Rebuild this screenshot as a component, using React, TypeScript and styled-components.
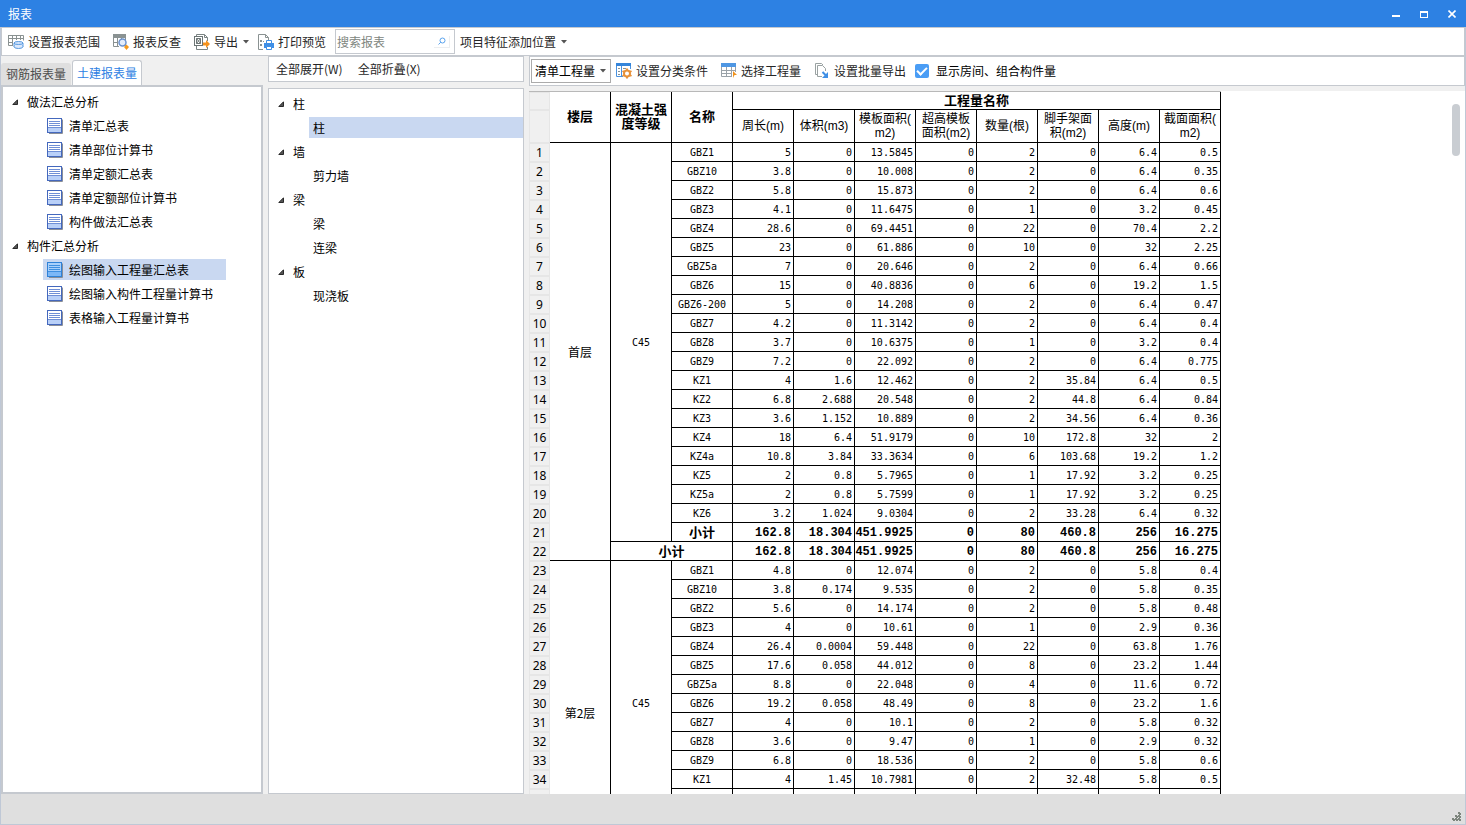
import React from "react";
import styled, { createGlobalStyle, css } from "styled-components";

const UI_FONT = `"Noto Sans CJK SC", "Noto Sans", sans-serif`;
const HEAD_FONT = `"Liberation Sans", "Noto Sans CJK SC", sans-serif`;
const MONO_FONT = `"DejaVu Sans Mono", "Noto Sans CJK SC", monospace`;
const LINE = "#c5c9cf";
const SELECTED = "#c9d8f1";

const GlobalStyle = createGlobalStyle`
  * { box-sizing: border-box; }
  body {
    margin: 0;
    font: 12px/18px ${UI_FONT};
    color: #000;
    background: #f0f0f0;
  }
  button, input, select { font: inherit; color: inherit; }
  ul { list-style: none; margin: 0; padding: 0; }
`;

const Window = styled.div`
  display: flex;
  flex-direction: column;
  height: 100vh;
  overflow: hidden;
`;

const TitleBar = styled.header`
  display: flex;
  justify-content: space-between;
  flex: none;
  height: 27px;
  padding-left: 8px;
  background: #2d81e3;
  color: #fff;
`;

const Title = styled.h1`
  margin: 0;
  font-size: 12px;
  font-weight: 400;
  line-height: 27px;
`;

const WindowButton = styled.button`
  width: 28px;
  height: 27px;
  padding: 0;
  border: 0;
  background: none;
  color: #fff;
  svg { display: block; margin: 0 auto; }
`;

const Frame = styled.div`
  display: flex;
  flex-direction: column;
  flex: 1;
  min-height: 0;
  border: solid #bfc8d6;
  border-width: 0 1px 1px;
`;

const Toolbar = styled.div`
  display: flex;
  align-items: center;
  flex: none;
  height: 29px;
  padding-left: 2px;
  background: #fff;
  border: 1px solid ${LINE};
`;

const CaretIcon = styled.svg`
  margin-left: 1px;
`;

const ToolButton = styled.button<{ $menu?: boolean; $plain?: boolean }>`
  display: flex;
  align-items: center;
  gap: 4px;
  flex: none;
  height: 22px;
  margin-right: 4px;
  padding: 0 ${(p) => (p.$menu ? 1 : p.$plain ? 7 : 5)}px 0 4px;
  border: 0;
  background: none;
  color: #262626;
  white-space: nowrap;
  svg { flex: none; }
`;

const SearchBox = styled.div`
  display: flex;
  align-items: center;
  flex: none;
  width: 120px;
  height: 25px;
  margin-right: 1px;
  padding: 0 4px 0 1px;
  border: 1px solid ${LINE};
`;

const SearchInput = styled.input`
  flex: 1;
  min-width: 0;
  padding: 0;
  border: 0;
  outline: 0;
  background: none;
  &::placeholder { color: #808680; opacity: 1; }
`;

const SearchButton = styled.button`
  display: grid;
  place-items: center;
  width: 16px;
  height: 12px;
  padding: 0;
  border: solid #eceef0;
  border-width: 0 1px 1px 0;
  background: none;
`;

const Body = styled.main`
  display: grid;
  grid-template-columns: 262px 256px minmax(0, 1fr);
  grid-template-rows: minmax(0, 1fr);
  gap: 5px;
  flex: 1;
  min-height: 0;
  background: #f0f0f0;
`;

const Column = styled.section`
  display: flex;
  flex-direction: column;
  min-width: 0;
  min-height: 0;
`;

const Tabs = styled.div`
  display: flex;
  align-items: flex-end;
  gap: 1px;
  flex: none;
  height: 29px;
`;

const Tab = styled.button<{ $active?: boolean }>`
  width: 70px;
  height: 22px;
  padding: 0;
  border: 0;
  border-radius: 3px 3px 0 0;
  background: #dfdfdf;
  color: #4d4d4d;
  white-space: nowrap;
  ${(p) =>
    p.$active &&
    css`
      height: 25px;
      border: 1px solid ${LINE};
      border-bottom: 0;
      background: #fff;
      color: #2d81e3;
    `}
`;

const TreePanel = styled.nav<{ $thick?: boolean }>`
  flex: 1;
  min-height: 0;
  overflow: hidden;
  padding-top: 3px;
  border: ${(p) => (p.$thick ? 2 : 1)}px solid ${LINE};
  background: #fff;
`;

const Branch = styled.button`
  display: flex;
  align-items: center;
  gap: 9px;
  width: 100%;
  height: 24px;
  padding: 0 0 0 9px;
  border: 0;
  background: none;
`;

const LeafItem = styled.li<{ $indent: number }>`
  display: flex;
  height: 24px;
  padding: 1px 0 2px ${(p) => p.$indent}px;
`;

const Leaf = styled.button<{ $selected?: boolean; $fill?: boolean }>`
  display: flex;
  align-items: center;
  gap: 6px;
  width: ${(p) => (p.$fill ? "100%" : "183px")};
  height: 21px;
  padding: 0 4px;
  border: 0;
  background: ${(p) => (p.$selected ? SELECTED : "none")};
  white-space: nowrap;
`;

const MiddleToolbar = styled(Toolbar)`
  height: 26px;
  margin-bottom: 6px;
  padding-left: 3px;
`;

const ReportToolbar = styled(Toolbar)`
  height: 30px;
  margin-bottom: 5px;
  padding-left: 1px;
`;

const SelectBox = styled.div`
  display: grid;
  align-items: center;
  flex: none;
  width: 80px;
  height: 24px;
  margin-right: 1px;
  border: 1px solid #ababab;
  select, svg { grid-area: 1 / 1; }
  svg { justify-self: end; margin-right: 4px; pointer-events: none; }
`;

const Select = styled.select`
  width: 100%;
  height: 22px;
  padding: 0 0 0 3px;
  border: 0;
  outline: 0;
  appearance: none;
  background: #fff;
`;

const CheckLabel = styled.label`
  display: flex;
  align-items: center;
  gap: 7px;
  white-space: nowrap;
`;

const CheckBox = styled.input`
  display: grid;
  place-items: center;
  width: 14px;
  height: 14px;
  margin: 0;
  appearance: none;
  border-radius: 2px;
  background: #4a9df5;
  &:checked::after {
    content: "";
    width: 8px;
    height: 4px;
    margin-bottom: 2px;
    border: solid #fff;
    border-width: 0 0 2px 2px;
    transform: rotate(-45deg);
  }
`;

const Sheet = styled.div`
  position: relative;
  flex: 1;
  min-height: 0;
  overflow: hidden;
  background: #fff;
`;

const ScrollThumb = styled.div`
  position: absolute;
  top: 13px;
  right: 5px;
  width: 8px;
  height: 52px;
  border-radius: 4px;
  background: #c9cdd2;
`;

const Table = styled.table`
  table-layout: fixed;
  width: 692px;
  border-spacing: 0;
  border-top: 1px solid #b8b8b8;
`;

const HeadRow = styled.tr<{ $tall?: boolean }>`
  height: ${(p) => (p.$tall ? 33 : 18)}px;
`;

const cell = css`
  padding: 0;
  border: solid #000;
  border-width: 0 1px 1px 0;
`;

const GroupHead = styled.th`
  ${cell}
  font: 700 13px/14px ${HEAD_FONT};
`;

const SubHead = styled.th`
  ${cell}
  font: 12px/14px ${HEAD_FONT};
  white-space: nowrap;
`;

const RowNumber = styled.th`
  padding: 0;
  border: 1px solid #e6e6e6;
  background: #f0f0f0;
  font: 12px/17px "Noto Sans", sans-serif;
`;

const MergedCell = styled.td`
  ${cell}
  text-align: center;
`;

const GradeCell = styled(MergedCell)`
  padding-top: 2px;
  font: 10px/16px ${MONO_FONT};
`;

const NameCell = styled.td<{ $total?: boolean }>`
  ${cell}
  height: 19px;
  padding-top: ${(p) => (p.$total ? 0 : 2)}px;
  text-align: center;
  font: ${(p) => (p.$total ? `700 13px/18px ${UI_FONT}` : `10px/16px ${MONO_FONT}`)};
`;

const NumberCell = styled.td<{ $total?: boolean }>`
  ${cell}
  padding: 2px 2px 0 0;
  text-align: right;
  white-space: nowrap;
  font: ${(p) => (p.$total ? `700 12px/16px "Liberation Mono", monospace` : `10px/16px ${MONO_FONT}`)};
`;

const StatusBar = styled.footer`
  display: flex;
  align-items: flex-end;
  justify-content: flex-end;
  flex: none;
  height: 30px;
  padding: 2px 3px;
  background: #dfdfdf;
`;

const Caret = () => (
  <CaretIcon width="6" height="4" viewBox="0 0 6 4">
    <path d="M0 0h6L3 3.5z" fill="#555" />
  </CaretIcon>
);

const Triangle = () => (
  <svg width="6" height="6" viewBox="0 0 6 6">
    <path d="M5.500 .8v4.700H.8z" fill="#555" stroke="#2a2a2a" />
  </svg>
);

const RangeIcon = () => (
  <svg width="16" height="16" viewBox="0 0 16 16" fill="none">
    <path d="M.5 1.500h15v5M.5 1v10.500H5M.5 4.500h15M.5 8.500H5M4.500 2v10M8.500 2v4M12.500 2v4" stroke="#8a9292" />
    <path d="M6.500 8.500v5h8v-5" fill="#dce9fc" />
    <ellipse cx="10.500" cy="12.500" rx="4.500" ry="2" fill="#dce9fc" stroke="#5a9be0" />
    <path d="M6.500 9v3h8V9z" fill="#dce9fc" />
    <path d="M6 9v3.500M15 9v3.500" stroke="#5a9be0" />
    <ellipse cx="10.500" cy="9" rx="4.500" ry="1.500" fill="#cfe2fb" stroke="#5a9be0" />
  </svg>
);

const CheckReportIcon = () => (
  <svg width="16" height="16" viewBox="0 0 16 16" fill="none">
    <path d="M0 0h13v4H0z" fill="#8a9292" />
    <path d="M.5 3v9.500H6M.5 8.500H5M4.500 4v8M8.500 4v1M12.500 3v3" stroke="#8a9292" />
    <circle cx="9.500" cy="8.500" r="3.500" fill="#e3edfb" stroke="#6c93cf" strokeWidth="1.500" />
    <path d="M12 11l1.500 1.500" stroke="#6c93cf" strokeWidth="1.500" />
    <path d="M13.500 10.500l2.500 2.500-2.500 3-2.500-3z" fill="#f59a1c" />
  </svg>
);

const ExportIcon = () => (
  <svg width="16" height="16" viewBox="0 0 16 16" fill="none">
    <path d="M2.500 2V.5h8l3 3V7M10.500 .5v3h3M2.500 12v3.500h11V13" stroke="#7b8484" />
    <rect x=".5" y="2.500" width="8" height="9" fill="#fff" stroke="#6c7575" />
    <path d="M2.500 4.500h4v5h-4zM2.500 4.500l4 5M6.500 4.500l-4 5" stroke="#6c7575" />
    <path d="M9 8.500h3V6l4 4-4 4v-2.500H9z" fill="#f5921c" />
  </svg>
);

const PrintIcon = () => (
  <svg width="16" height="16" viewBox="0 0 16 16" fill="none">
    <path d="M5 15.500H.5V.5h7l3 3V6M7.500 .5v3h3" stroke="#8a9292" />
    <path d="M2 6h2v2H2zM2 10h2v2H2zM5 7h1v1H5z" fill="#8a9292" />
    <path d="M6 9h10v5H6z" fill="#3f8fe6" />
    <path d="M8.500 9V6.500h5V9M8.500 12.500h5v3h-5z" fill="#fff" stroke="#3f8fe6" />
  </svg>
);

const SearchIcon = () => (
  <svg width="8" height="8" viewBox="0 0 8 8" fill="none">
    <circle cx="4.500" cy="3.500" r="2.500" stroke="#5aa3ee" />
    <path d="M2.800 5.200L.5 7.500" stroke="#5aa3ee" />
  </svg>
);

const ClassifyIcon = () => (
  <svg width="16" height="16" viewBox="0 0 16 16" fill="none">
    <path d="M.5 1v12.500H7M14.500 1v5M5.500 3v10" stroke="#4a92df" />
    <path d="M0 0h15v3H0z" fill="#3585da" />
    <path d="M2 5.500h2M2 8.500h2M2 11.500h2M7 5.500h3M7 8.500h1" stroke="#8a9292" />
    <circle cx="11" cy="10.500" r="3" fill="#fff" stroke="#e8923a" strokeWidth="2" />
    <path d="M11 5.500v2M11 13.500v2M6.500 8l1.800 1M6.500 13l1.800-1M15.500 8l-1.800 1M15.500 13l-1.800-1" stroke="#e8923a" strokeWidth="2" />
  </svg>
);

const ChooseIcon = () => (
  <svg width="16" height="16" viewBox="0 0 16 16" fill="none">
    <path d="M.5 4v9.500H11M.5 7.500h14M.5 10.500H11M5.500 4v10M10.500 4v10M14.500 4v5" stroke="#9aa2a8" />
    <path d="M0 0h15v4H0z" fill="#4f97e3" />
    <path d="M12 8l4 4h-2.500L12 15z" fill="#f0921c" />
  </svg>
);

const BatchIcon = () => (
  <svg width="16" height="16" viewBox="0 0 16 16" fill="none">
    <path d="M3 11.500H1.500V.5h6L9 2" stroke="#9aa2a2" />
    <path d="M8 13.500H3.500v-11h5l3 3V8" stroke="#9aa2a2" />
    <path d="M8.500 9l4 4" stroke="#3f8fe6" strokeWidth="2" />
    <path d="M14 9v6H8z" fill="#3f8fe6" />
  </svg>
);

const ReportIcon = ({ active }: { active?: boolean }) => (
  <svg width="16" height="16" viewBox="0 0 16 16" fill="none">
    <path d="M2 15.500h13.500V1.500" stroke="#8a8f99" />
    <rect x=".5" y=".5" width="14" height="14" fill={active ? "#a9d0fb" : "#fff"} stroke={active ? "#2f82d8" : "#4468bd"} />
    <path d="M1 10h13v4H1z" fill={active ? "#7db8f7" : "#b9d0f8"} />
    <path d="M2 3.500h11M2 5.500h11M2 7.500h11M1 9.500h13" stroke={active ? "#3f8fe0" : "#6f8fd6"} />
  </svg>
);

const Grip = () => (
  <svg width="10" height="10" viewBox="0 0 10 10">
    <path d="M6 0h2v2H6zM7 1h2v2H7zM3 3h2v2H3zM4 4h2v2H4zM6 3h2v2H6zM7 4h2v2H7zM0 6h2v2H0zM1 7h2v2H1zM3 6h2v2H3zM4 7h2v2H4zM6 6h2v2H6zM7 7h2v2H7z" fill="#7d857d" />
  </svg>
);

type Node = { label: string; children: string[] };

const REPORTS: Node[] = [
  { label: "做法汇总分析", children: ["清单汇总表", "清单部位计算书", "清单定额汇总表", "清单定额部位计算书", "构件做法汇总表"] },
  { label: "构件汇总分析", children: ["绘图输入工程量汇总表", "绘图输入构件工程量计算书", "表格输入工程量计算书"] },
];

const COMPONENTS: Node[] = [
  { label: "柱", children: ["柱"] },
  { label: "墙", children: ["剪力墙"] },
  { label: "梁", children: ["梁", "连梁"] },
  { label: "板", children: ["现浇板"] },
];

const MEASURES: string[][] = [
  ["周长(m)"],
  ["体积(m3)"],
  ["模板面积(", "m2)"],
  ["超高模板", "面积(m2)"],
  ["数量(根)"],
  ["脚手架面", "积(m2)"],
  ["高度(m)"],
  ["截面面积(", "m2)"],
];

const TOTAL = "小计 162.8 18.304 451.9925 0 80 460.8 256 16.275";

const FIRST_FLOOR = [
  "GBZ1 5 0 13.5845 0 2 0 6.4 0.5",
  "GBZ10 3.8 0 10.008 0 2 0 6.4 0.35",
  "GBZ2 5.8 0 15.873 0 2 0 6.4 0.6",
  "GBZ3 4.1 0 11.6475 0 1 0 3.2 0.45",
  "GBZ4 28.6 0 69.4451 0 22 0 70.4 2.2",
  "GBZ5 23 0 61.886 0 10 0 32 2.25",
  "GBZ5a 7 0 20.646 0 2 0 6.4 0.66",
  "GBZ6 15 0 40.8836 0 6 0 19.2 1.5",
  "GBZ6-200 5 0 14.208 0 2 0 6.4 0.47",
  "GBZ7 4.2 0 11.3142 0 2 0 6.4 0.4",
  "GBZ8 3.7 0 10.6375 0 1 0 3.2 0.4",
  "GBZ9 7.2 0 22.092 0 2 0 6.4 0.775",
  "KZ1 4 1.6 12.462 0 2 35.84 6.4 0.5",
  "KZ2 6.8 2.688 20.548 0 2 44.8 6.4 0.84",
  "KZ3 3.6 1.152 10.889 0 2 34.56 6.4 0.36",
  "KZ4 18 6.4 51.9179 0 10 172.8 32 2",
  "KZ4a 10.8 3.84 33.3634 0 6 103.68 19.2 1.2",
  "KZ5 2 0.8 5.7965 0 1 17.92 3.2 0.25",
  "KZ5a 2 0.8 5.7599 0 1 17.92 3.2 0.25",
  "KZ6 3.2 1.024 9.0304 0 2 33.28 6.4 0.32",
  TOTAL,
  TOTAL,
];

const SECOND_FLOOR = [
  "GBZ1 4.8 0 12.074 0 2 0 5.8 0.4",
  "GBZ10 3.8 0.174 9.535 0 2 0 5.8 0.35",
  "GBZ2 5.6 0 14.174 0 2 0 5.8 0.48",
  "GBZ3 4 0 10.61 0 1 0 2.9 0.36",
  "GBZ4 26.4 0.0004 59.448 0 22 0 63.8 1.76",
  "GBZ5 17.6 0.058 44.012 0 8 0 23.2 1.44",
  "GBZ5a 8.8 0 22.048 0 4 0 11.6 0.72",
  "GBZ6 19.2 0.058 48.49 0 8 0 23.2 1.6",
  "GBZ7 4 0 10.1 0 2 0 5.8 0.32",
  "GBZ8 3.6 0 9.47 0 1 0 2.9 0.32",
  "GBZ9 6.8 0 18.536 0 2 0 5.8 0.6",
  "KZ1 4 1.45 10.7981 0 2 32.48 5.8 0.5",
  "",
  "",
  "",
  "",
];

const FLOORS = [
  { name: "首层", grade: "C45", start: 1, rows: FIRST_FLOOR },
  { name: "第2层", grade: "C45", start: 23, rows: SECOND_FLOOR },
];

const Tree = ({ nodes, selected, icons, indent }: { nodes: Node[]; selected: string; icons?: boolean; indent: number }) => (
  <ul>
    {nodes.map((node) => (
      <li key={node.label}>
        <Branch type="button">
          <Triangle />
          {node.label}
        </Branch>
        <ul>
          {node.children.map((child) => (
            <LeafItem key={child} $indent={indent}>
              <Leaf type="button" $fill={!icons} $selected={child === selected}>
                {icons && <ReportIcon active={child === selected} />}
                {child}
              </Leaf>
            </LeafItem>
          ))}
        </ul>
      </li>
    ))}
  </ul>
);

const FloorRows = ({ name, grade, start, rows }: (typeof FLOORS)[number]) => (
  <tbody>
    {rows.map((row, i) => {
      const [label = "", ...values] = row.split(" ");
      const total = label === "小计";
      const last = i === rows.length - 1;
      return (
        <tr key={i}>
          <RowNumber scope="row">{row ? start + i : ""}</RowNumber>
          {i === 0 && <MergedCell rowSpan={rows.length}>{name}</MergedCell>}
          {i === 0 && <GradeCell rowSpan={rows.length - 1}>{grade}</GradeCell>}
          <NameCell $total={total} colSpan={last ? 2 : 1}>{label}</NameCell>
          {MEASURES.map((_, k) => (
            <NumberCell key={k} $total={total}>{values[k]}</NumberCell>
          ))}
        </tr>
      );
    })}
  </tbody>
);

export default function App() {
  return (
    <Window>
      <GlobalStyle />
      <TitleBar>
        <Title>报表</Title>
        <div>
          <WindowButton type="button" aria-label="最小化">
            <svg width="8" height="8" viewBox="0 0 8 8"><path d="M0 5h8v2H0z" fill="#fff" /></svg>
          </WindowButton>
          <WindowButton type="button" aria-label="最大化">
            <svg width="8" height="8" viewBox="0 0 8 8"><path d="M0 1h8v7H0zM1 3v4h6V3z" fill="#fff" fillRule="evenodd" /></svg>
          </WindowButton>
          <WindowButton type="button" aria-label="关闭">
            <svg width="8" height="8" viewBox="0 0 8 8"><path d="M.5 .5l7 7M7.500 .5l-7 7" stroke="#fff" strokeWidth="1.600" /></svg>
          </WindowButton>
        </div>
      </TitleBar>
      <Frame>
        <Toolbar>
          <ToolButton type="button"><RangeIcon />设置报表范围</ToolButton>
          <ToolButton type="button"><CheckReportIcon />报表反查</ToolButton>
          <ToolButton type="button" $menu><ExportIcon />导出<Caret /></ToolButton>
          <ToolButton type="button"><PrintIcon />打印预览</ToolButton>
          <SearchBox>
            <SearchInput type="text" placeholder="搜索报表" aria-label="搜索报表" />
            <SearchButton type="button" aria-label="搜索"><SearchIcon /></SearchButton>
          </SearchBox>
          <ToolButton type="button" $menu $plain>项目特征添加位置<Caret /></ToolButton>
        </Toolbar>
        <Body>
          <Column>
            <Tabs role="tablist">
              <Tab type="button" role="tab" aria-selected={false}>钢筋报表量</Tab>
              <Tab type="button" role="tab" aria-selected $active>土建报表量</Tab>
            </Tabs>
            <TreePanel $thick>
              <Tree nodes={REPORTS} selected="绘图输入工程量汇总表" icons indent={40} />
            </TreePanel>
          </Column>
          <Column>
            <MiddleToolbar>
              <ToolButton type="button" $plain>全部展开(W)</ToolButton>
              <ToolButton type="button" $plain>全部折叠(X)</ToolButton>
            </MiddleToolbar>
            <TreePanel>
              <Tree nodes={COMPONENTS} selected="柱" indent={40} />
            </TreePanel>
          </Column>
          <Column>
            <ReportToolbar>
              <SelectBox>
                <Select aria-label="工程量类型">
                  <option>清单工程量</option>
                </Select>
                <Caret />
              </SelectBox>
              <ToolButton type="button"><ClassifyIcon />设置分类条件</ToolButton>
              <ToolButton type="button"><ChooseIcon />选择工程量</ToolButton>
              <ToolButton type="button"><BatchIcon />设置批量导出</ToolButton>
              <CheckLabel>
                <CheckBox type="checkbox" defaultChecked />
                显示房间、组合构件量
              </CheckLabel>
            </ReportToolbar>
            <Sheet>
              <Table>
                <colgroup>
                  <col style={{ width: 21 }} />
                  {Array.from({ length: 11 }, (_, i) => <col key={i} />)}
                </colgroup>
                <thead>
                  <HeadRow>
                    <RowNumber as="td" />
                    <GroupHead rowSpan={2}>楼层</GroupHead>
                    <GroupHead rowSpan={2}>混凝土强<br />度等级</GroupHead>
                    <GroupHead rowSpan={2}>名称</GroupHead>
                    <GroupHead colSpan={8}>工程量名称</GroupHead>
                  </HeadRow>
                  <HeadRow $tall>
                    <RowNumber as="td" />
                    {MEASURES.map((lines) => (
                      <SubHead key={lines[0]}>
                        {lines.map((line, i) => (
                          <React.Fragment key={line}>
                            {i > 0 && <br />}
                            {line}
                          </React.Fragment>
                        ))}
                      </SubHead>
                    ))}
                  </HeadRow>
                </thead>
                {FLOORS.map((floor) => <FloorRows key={floor.name} {...floor} />)}
              </Table>
              <ScrollThumb />
            </Sheet>
          </Column>
        </Body>
        <StatusBar><Grip /></StatusBar>
      </Frame>
    </Window>
  );
}
